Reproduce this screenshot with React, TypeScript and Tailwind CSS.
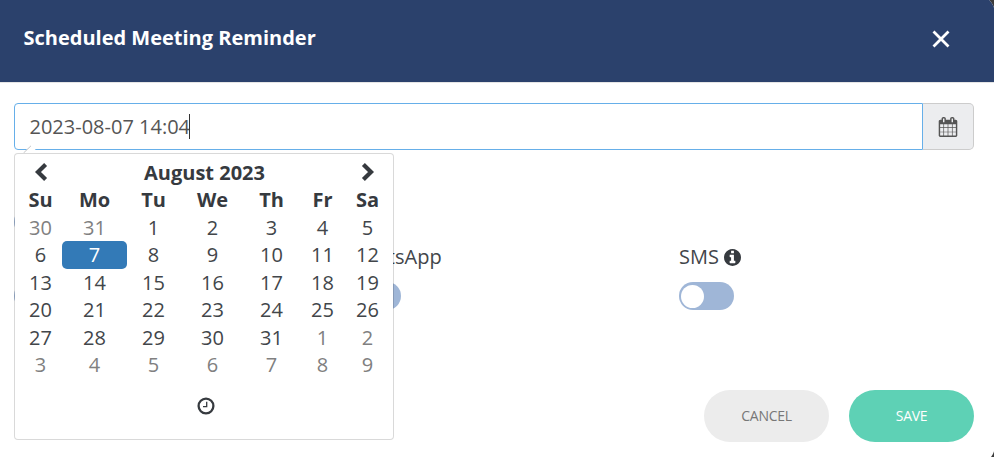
import React from "react";

const week = ["Su", "Mo", "Tu", "We", "Th", "Fr", "Sa"];
const days = [30, 31, ...Array.from({ length: 31 }, (_, i) => i + 1), 1, 2, 3, 4, 5, 6, 7, 8, 9];

function Chevron({ flip = false }: { flip?: boolean }) {
  return (
    <svg viewBox="0 0 14 20" className={flip ? "mb-px h-5 w-3.5 -scale-x-100" : "mb-px h-5 w-3.5"}>
      <path d="M11.6 2.6 4 10l7.6 7.4" fill="none" stroke="#363a3f" strokeWidth="4.2" />
    </svg>
  );
}

function CalendarIcon() {
  return (
    <svg viewBox="0 0 1792 1792" className="size-5" fill="#555">
      <path d="M192 1664h288v-288h-288v288zm352 0h320v-288h-320v288zm-352-352h288v-320h-288v320zm352 0h320v-320h-320v320zm-352-384h288v-288h-288v288zm736 736h320v-288h-320v288zm-384-736h320v-288h-320v288zm768 736h288v-288h-288v288zm-384-352h320v-320h-320v320zm-352-864v-288q0-13-9.5-22.5t-22.5-9.5h-64q-13 0-22.5 9.5t-9.5 22.5v288q0 13 9.5 22.5t22.5 9.5h64q13 0 22.5-9.5t9.5-22.5zm736 864h288v-320h-288v320zm-384-384h320v-288h-320v288zm384 0h288v-288h-288v288zm32-480v-288q0-13-9.5-22.5t-22.5-9.5h-64q-13 0-22.5 9.5t-9.5 22.5v288q0 13 9.5 22.5t22.5 9.5h64q13 0 22.5-9.5t9.5-22.5zm384-64v1280q0 52-38 90t-90 38h-1408q-52 0-90-38t-38-90v-1280q0-52 38-90t90-38h128v-96q0-66 47-113t113-47h64q66 0 113 47t47 113v96h384v-96q0-66 47-113t113-47h64q66 0 113 47t47 113v96h128q52 0 90 38t38 90z" />
    </svg>
  );
}

function InfoIcon() {
  return (
    <svg viewBox="128 128 1536 1536" className="size-[17px]" fill="#363a3f">
      <path d="M1152 1376v-160q0-14-9-23t-23-9h-96v-512q0-14-9-23t-23-9h-320q-14 0-23 9t-9 23v160q0 14 9 23t23 9h96v320h-96q-14 0-23 9t-9 23v160q0 14 9 23t23 9h448q14 0 23-9t9-23zm-128-896v-160q0-14-9-23t-23-9h-192q-14 0-23 9t-9 23v160q0 14 9 23t23 9h192q14 0 23-9t9-23zm640 416q0 209-103 385.5t-279.5 279.5-385.5 103-385.5-103-279.5-279.5-103-385.5 103-385.5 279.5-279.5 385.5-103 385.5 103 279.5 279.5 103 385.5z" />
    </svg>
  );
}

function Toggle() {
  return (
    <div className="flex h-7 w-[55px] items-center rounded-full bg-[#9fb6d7] px-0.5">
      <div className="size-[23px] rounded-full bg-white" />
    </div>
  );
}

function Channel({ name, info = false }: { name?: string; info?: boolean }) {
  return (
    <div className="flex flex-col items-start gap-[10px]">
      <div className="flex h-[30px] items-center gap-[5px] text-[20px] text-[#42464a]">
        {name}
        {info && <InfoIcon />}
      </div>
      <Toggle />
    </div>
  );
}

function DatePicker() {
  return (
    <div className="absolute left-0 top-[50px] h-[287px] w-[380px] rounded-[4px] border border-black/15 bg-white bg-clip-padding pl-[4px] pt-[4.6px]">
      <svg viewBox="0 0 16 8" className="absolute left-[8px] top-[-9px] h-2 w-4">
        <path d="M0 8 8 .5 16 8z" fill="#fff" />
        <path d="M.5 8 8 .8" stroke="#c4c5c6" fill="none" />
      </svg>
      <div className="grid w-[370px] auto-rows-[27.5px] grid-cols-[43px_65px_53px_65px_53px_49px_41px] items-center justify-items-center text-[20px] leading-[27px]">
        <Chevron />
        <div className="col-span-5 font-bold">August 2023</div>
        <Chevron flip />
        {week.map((d) => (
          <div key={d} className="font-bold">{d}</div>
        ))}
        {days.map((d, i) => (
          <div
            key={i}
            className={
              i === 8
                ? "flex h-full w-full items-center justify-center rounded-[5px] bg-[#337ab7] text-white"
                : i < 2 || i > 32
                  ? "text-[#808080]"
                  : "text-[#42464a]"
            }
          >
            {d}
          </div>
        ))}
      </div>
      <div className="mt-[18px] flex w-[373px] justify-center">
        <svg viewBox="0 0 18 18" className="size-[18px]" fill="none" stroke="#363a3f">
          <circle cx="9" cy="9" r="7.4" strokeWidth="2.3" />
          <path d="M9.7 4.7v5H6" strokeWidth="1.3" />
        </svg>
      </div>
    </div>
  );
}

export default function App() {
  return (
    <div className="flex h-[457px] w-[994px] overflow-hidden bg-[#3b3b3b] font-['Open_Sans','Noto_Sans',sans-serif] text-[#363a3f]">
      <div className="-mt-[6px] h-[471px] w-[995px] shrink-0 overflow-hidden rounded-r-[20px] bg-white">
        <header className="flex h-[88px] items-start justify-between bg-[#2b416c] pl-[23.5px] pr-[45px] pt-[6px] text-white">
          <h1 className="pt-[23px] text-[20px] font-bold leading-[30px]">Scheduled Meeting Reminder</h1>
          <svg viewBox="0 0 18 18" className="mt-[30px] size-[18px]">
            <path d="m1.5 1.5 15 15m0-15-15 15" stroke="#fff" strokeWidth="2.8" />
          </svg>
        </header>
        <main className="border-t border-[#e5e5e5] px-[14px] pt-5">
          <div className="relative flex h-[47px] w-[960px]">
            <div className="flex w-[909px] items-center rounded-l-[4px] border border-[#66afe9] pl-[14.5px] text-[20px] text-[#555]">
              <span className="-mr-px">2023-08-07 14:04</span>
              <span className="h-[25px] w-px bg-[#333]" />
            </div>
            <div className="flex flex-1 items-center justify-center rounded-r-[5px] border border-l-0 border-[#ccc] bg-[#ecedef]">
              <CalendarIcon />
            </div>
            <DatePicker />
          </div>
          <div className="mt-[58px]">
            <Toggle />
          </div>
          <div className="mt-[6px] grid grid-cols-[332px_333px_1fr]">
            <Channel />
            <Channel name="WhatsApp" />
            <Channel name="SMS" info />
          </div>
          <div className="mt-20 flex w-[960px] justify-end gap-5 text-[14px] tracking-[-0.3px]">
            <button className="h-[52px] w-[125px] rounded-full bg-[#ececec] pb-0.5 text-[#777]">CANCEL</button>
            <button className="h-[52px] w-[125px] rounded-full bg-[#5ed1b5] pb-0.5 text-white">SAVE</button>
          </div>
        </main>
      </div>
    </div>
  );
}
